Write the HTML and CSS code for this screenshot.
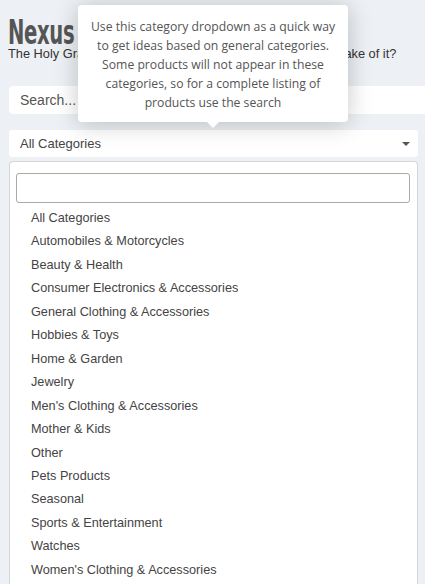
FILE: index.html
```html
<!DOCTYPE html>
<html lang="en">
<head>
  <meta charset="UTF-8">
  <title>Nexus</title>
  <link rel="stylesheet" href="styles.css">
</head>
<body>
  <div class="container">
    <div class="header">
      <h1 class="logo"><span>Nexus</span></h1>
      <p class="tagline">The Holy Grail of dropshipping products, so what will you make of it?</p>
    </div>

    <!-- search bar -->
    <input type="text" class="search" placeholder="Search...">

    <!-- category select with its tooltip -->
    <div class="select-wrap">
      <div class="tip">
        Use this category dropdown as a quick way to get ideas based on general categories. Some products will not appear in these categories, so for a complete listing of products use the search
      </div>
      <div class="select">
        <span>All Categories</span>
        <span class="caret"></span>
      </div>
    </div>

    <div class="dropdown">
      <input type="text" class="dropdown-search">
      <ul class="options">
        <li>All Categories</li>
        <li>Automobiles &amp; Motorcycles</li>
        <li>Beauty &amp; Health</li>
        <li>Consumer Electronics &amp; Accessories</li>
        <li>General Clothing &amp; Accessories</li>
        <li>Hobbies &amp; Toys</li>
        <li>Home &amp; Garden</li>
        <li>Jewelry</li>
        <li>Men's Clothing &amp; Accessories</li>
        <li>Mother &amp; Kids</li>
        <li>Other</li>
        <li>Pets Products</li>
        <li>Seasonal</li>
        <li>Sports &amp; Entertainment</li>
        <li>Watches</li>
        <li>Women's Clothing &amp; Accessories</li>
      </ul>
    </div>
  </div>
</body>
</html>
```

FILE: styles.css
```css
body {
  font-family: 'Liberation Sans', Arial, sans-serif;
  background-color: #edf0f4;
  margin: 0;
  color: #333;
  font-size: 14px;
  overflow: hidden;
}

.container {
  padding: 0 7px 0 9px;
}

.header {
  padding-top: 20px;
  margin-left: -1px;
}

.logo {
  margin: 0;
  font-family: 'DejaVu Sans Condensed', 'DejaVu Sans', sans-serif;
  font-size: 33px;
  line-height: 26px;
  font-weight: bold;
  color: #555;
}

/* the logo face is narrower than anything installed, so squeeze it */
.logo span {
  display: inline-block;
  transform: scaleX(0.66);
  transform-origin: left center;
  letter-spacing: -0.5px;
}

.tagline {
  margin: 0;
  font-size: 12.8px;
  line-height: 15px;
  color: #333;
}

.search {
  display: block;
  box-sizing: border-box;
  width: calc(100% + 7px);
  height: 28px;
  margin-top: 25px;
  padding: 0 11px;
  border: none;
  border-radius: 4px 0 0 4px;
  background: #fff;
  font-family: inherit;
  font-size: 14px;
  color: #555;
}

.search::placeholder {
  color: #555;
}

.select-wrap {
  position: relative;
  margin-top: 16px;
}

.select {
  display: flex;
  align-items: center;
  justify-content: space-between;
  height: 27px;
  padding: 0 8px 0 11px;
  background: #fff;
  border-radius: 3px;
  font-size: 13px;
  color: #444;
}

.caret {
  width: 0;
  height: 0;
  border-left: 4px solid transparent;
  border-right: 4px solid transparent;
  border-top: 4px solid #555;
}

.tip {
  position: absolute;
  left: 69px;
  bottom: 35px;
  width: 270px;
  box-sizing: border-box;
  padding: 12px 9px 10px;
  background: #fff;
  border-radius: 4px;
  box-shadow: 0 2px 24px rgba(0, 0, 0, 0.22);
  font-family: 'Open Sans', sans-serif;
  font-size: 12.2px;
  line-height: 19px;
  color: #555;
  text-align: center;
  z-index: 2;
}

.tip::after {
  content: "";
  position: absolute;
  left: 129px;
  bottom: -6px;
  border-left: 6px solid transparent;
  border-right: 6px solid transparent;
  border-top: 6px solid #fff;
}

.dropdown {
  margin-top: 4px;
  background: #fff;
  border: 1px solid #d3d6da;
  border-bottom: none;
  border-radius: 4px 4px 0 0;
  padding: 11px 7px 0 6px;
  height: 440px;
}

.dropdown-search {
  display: block;
  box-sizing: border-box;
  width: 100%;
  height: 30px;
  border: 1px solid #aaa;
  border-radius: 3px;
}

.options {
  list-style: none;
  margin: 0;
  padding: 4px 0 0;
}

.options li {
  padding: 3px 15px;
  line-height: 17.45px;
  font-size: 12.7px;
  color: #444;
}
```
